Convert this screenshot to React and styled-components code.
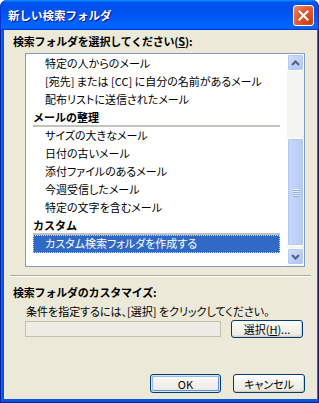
import React from 'react';
import styled, { createGlobalStyle } from 'styled-components';

const Global = createGlobalStyle`
  html, body { margin: 0; padding: 0; background: #ffffff; }
  body { font-family: "Noto Sans CJK JP", "Noto Sans", sans-serif; font-size: 11px; color: #000; }
  * { box-sizing: border-box; }
`;

const Window = styled.div`
  width: 319px;
  height: 403px;
  display: flex;
  flex-direction: column;
`;

const TitleBar = styled.div`
  height: 30px;
  flex: none;
  border-radius: 7px 7px 0 0;
  background: linear-gradient(180deg, #0997ff 0%, #0053ee 8%, #0050ee 40%, #0066ff 88%, #0066ff 93%, #005bff 95%, #003dd7 96%, #003dd7 100%);
  display: flex;
  align-items: center;
  justify-content: space-between;
  padding: 0 5px 0 8px;
  box-shadow: inset 1px 0 0 #0831d9, inset -1px 0 0 #0831d9;
`;

const Title = styled.div`
  color: #fff;
  font-weight: bold;
  font-size: 11.5px;
  line-height: 14px;
  text-shadow: 1px 1px 0 #0f1089;
`;

const CloseButton = styled.div`
  width: 21px;
  height: 21px;
  border: 1px solid #fff;
  border-radius: 3px;
  background: radial-gradient(circle at 85% 85%, #c94214 0%, #e0592e 55%, #ec8a6c 100%);
  display: flex;
  align-items: center;
  justify-content: center;
  margin-top: 1px;
`;

const Frame = styled.div`
  flex: 1;
  display: flex;
  padding: 0 4px 4px;
  background: #0855dd;
  box-shadow: inset 1px 0 0 #001ea0, inset -1px 0 0 #001ea0, inset 0 -1px 0 #001ea0, inset 2px 0 0 #166aee, inset -2px 0 0 #166aee;
`;

const Client = styled.div`
  flex: 1;
  background: #ece9d8;
  display: flex;
  flex-direction: column;
  padding: 4px 12px 6px 9px;
`;

const SectionLabel = styled.div`
  font-weight: bold;
  line-height: 14px;
  height: 14px;
  white-space: nowrap;
  letter-spacing: -0.2px;
`;

const Key = styled.span`
  text-decoration: underline;
`;

const ListBox = styled.div`
  margin: 5px 0 0 12px;
  width: 280px;
  height: 214px;
  border: 1px solid #7f9db9;
  background: #fff;
  display: flex;
  overflow: hidden;
`;

const ListContent = styled.div`
  flex: 1;
  padding: 1px 7px 0 7px;
  overflow: hidden;
`;

const Row = styled.div`
  height: 18px;
  line-height: 17px;
  white-space: nowrap;
  padding-left: ${p => (p.$header ? 0 : 12)}px;
  font-weight: ${p => (p.$header ? 'bold' : 'normal')};
  font-feature-settings: ${p => (p.$header ? 'normal' : '"palt"')};
  border-bottom: ${p => (p.$header ? '2px solid #c4c2bd' : 'none')};
  background: ${p => (p.$selected ? '#316ac5' : 'transparent')};
  color: ${p => (p.$selected ? '#fff' : '#000')};
  outline: ${p => (p.$selected ? '1px dotted #c9d6ee' : 'none')};
  outline-offset: -1px;
`;

const ScrollBar = styled.div`
  width: 17px;
  flex: none;
  background: #f4f4f0;
  display: flex;
  flex-direction: column;
  padding: 0 0 1px 0;
`;

const ScrollArrow = styled.div`
  height: 17px;
  flex: none;
  border: 1px solid #fff;
  border-radius: 2px;
  background: linear-gradient(135deg, #d6e1fb 0%, #bccdf6 60%, #b0c3f2 100%);
  box-shadow: inset 0 0 0 1px #b6c8f2;
  display: flex;
  align-items: center;
  justify-content: center;
`;

const Track = styled.div`
  flex: 1;
  display: flex;
  flex-direction: column;
  padding: 67px 0 2px;
`;

const Thumb = styled.div`
  flex: 1;
  border: 1px solid #fff;
  border-radius: 2px;
  background: linear-gradient(90deg, #c9d7fb 0%, #bfd0f8 60%, #b5c7f4 100%);
  box-shadow: inset 0 0 0 1px #b4c7f3;
  display: flex;
  flex-direction: column;
  align-items: center;
  justify-content: center;
  gap: 1px;
`;

const Grip = styled.div`
  width: 6px;
  height: 1px;
  background: #eef3fe;
  box-shadow: 0 1px 0 #8fa8e0;
`;

const Etched = styled.div`
  margin: 8px -6px 0 -3px;
  height: 2px;
  border-top: 1px solid #aca899;
  border-bottom: 1px solid #fff;
`;

const Label2 = styled(SectionLabel)`
  margin-top: 8px;
`;

const Info = styled.div`
  margin: 5px 0 0 13px;
  line-height: 14px;
  white-space: nowrap;
  font-feature-settings: "palt";
`;

const InputRow = styled.div`
  display: flex;
  align-items: center;
  gap: 10px;
  margin: 2px 0 0 12px;
`;

const TextBox = styled.div`
  width: 196px;
  height: 16px;
  border: 1px solid #c2bfb0;
  background: #eeede5;
`;

const Button = styled.button`
  width: ${p => p.$w || 72}px;
  height: ${p => p.$h || 18}px;
  padding: 0;
  font: inherit;
  font-size: 11px;
  line-height: 14px;
  font-feature-settings: "palt";
  color: #000;
  border: 1px solid #003c74;
  border-radius: 3px;
  background: linear-gradient(180deg, #ffffff 0%, #f4f3ee 40%, #ecebe6 86%, #d6d0c5 100%);
  box-shadow: ${p => (p.$default
    ? 'inset 0 0 0 1px #cee7ff, inset 1px 1px 0 1px #98b8ea, inset -1px -1px 0 1px #6a8fd8'
    : 'inset -1px -1px 0 #d6d0c5')};
  display: flex;
  align-items: center;
  justify-content: center;
`;

const Footer = styled.div`
  margin-top: auto;
  display: flex;
  justify-content: flex-end;
  gap: 12px;
`;

const Chevron = ({ up }) => (
  <svg width="9" height="6" viewBox="0 0 9 6">
    <polyline
      points={up ? '1,5 4.5,1.5 8,5' : '1,1 4.5,4.5 8,1'}
      fill="none"
      stroke="#4d6185"
      strokeWidth="2"
    />
  </svg>
);

const items = [
  { t: '特定の人からのメール' },
  { t: '[宛先] または [CC] に自分の名前があるメール' },
  { t: '配布リストに送信されたメール' },
  { t: 'メールの整理', h: true },
  { t: 'サイズの大きなメール' },
  { t: '日付の古いメール' },
  { t: '添付ファイルのあるメール' },
  { t: '今週受信したメール' },
  { t: '特定の文字を含むメール' },
  { t: 'カスタム', h: true },
  { t: 'カスタム検索フォルダを作成する', s: true },
];

export default function App() {
  return (
    <>
      <Global />
      <Window>
        <TitleBar>
          <Title>新しい検索フォルダ</Title>
          <CloseButton>
            <svg width="11" height="11" viewBox="0 0 11 11">
              <path d="M1.5 1.5 L9.5 9.5 M9.5 1.5 L1.5 9.5" stroke="#fff" strokeWidth="2" strokeLinecap="square" />
            </svg>
          </CloseButton>
        </TitleBar>
        <Frame>
          <Client>
            <SectionLabel>
              検索フォルダを選択してください(<Key>S</Key>):
            </SectionLabel>
            <ListBox>
              <ListContent>
                {items.map((it, i) => (
                  <Row key={i} $header={it.h} $selected={it.s}>
                    {it.t}
                  </Row>
                ))}
              </ListContent>
              <ScrollBar>
                <ScrollArrow><Chevron up /></ScrollArrow>
                <Track>
                  <Thumb>
                    <Grip />
                    <Grip />
                    <Grip />
                    <Grip />
                  </Thumb>
                </Track>
                <ScrollArrow><Chevron /></ScrollArrow>
              </ScrollBar>
            </ListBox>
            <Etched />
            <Label2>検索フォルダのカスタマイズ:</Label2>
            <Info>条件を指定するには、[選択] をクリックしてください。</Info>
            <InputRow>
              <TextBox />
              <Button $w={72} $h={18}>
                選択(<Key>H</Key>)...
              </Button>
            </InputRow>
            <Footer>
              <Button $w={71} $h={19} $default>OK</Button>
              <Button $w={72} $h={19}>キャンセル</Button>
            </Footer>
          </Client>
        </Frame>
      </Window>
    </>
  );
}
